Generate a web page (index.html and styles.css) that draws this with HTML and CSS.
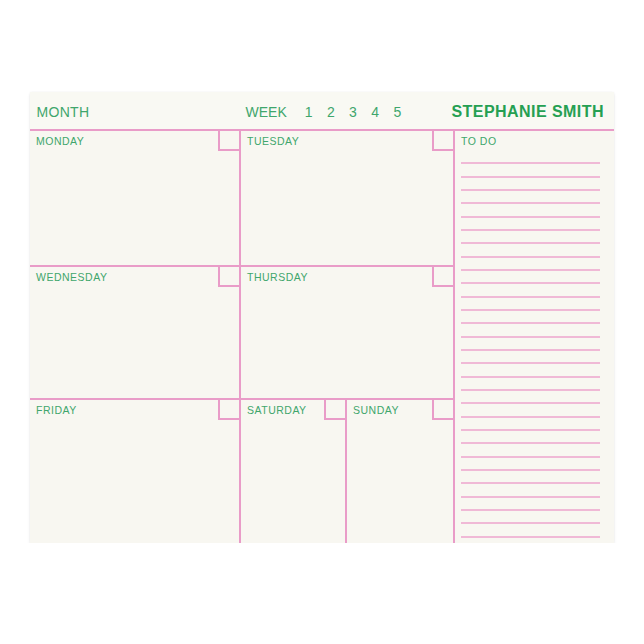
FILE: index.html
```html
<!DOCTYPE html>
<html lang="en">
<head>
<meta charset="utf-8">
<title>Weekly Planner Notepad</title>
<link rel="stylesheet" href="styles.css">
</head>
<body>
<main class="sheet">
  <header class="sheet-head">
    <span class="month">MONTH</span>
    <div class="week">
      <span class="week-label">WEEK</span>
      <ol class="week-nums">
        <li>1</li><li>2</li><li>3</li><li>4</li><li>5</li>
      </ol>
    </div>
    <span class="owner">STEPHANIE SMITH</span>
  </header>
  <div class="planner">
    <section class="day col1 row-line">
      <div class="day-head"><h2 class="day-name">MONDAY</h2><span class="check"></span></div>
    </section>
    <section class="day col2 row-line">
      <div class="day-head"><h2 class="day-name">TUESDAY</h2><span class="check"></span></div>
    </section>
    <section class="todo">
      <h2 class="todo-title">TO DO</h2>
      <ul class="todo-lines">
        <li></li><li></li><li></li><li></li><li></li><li></li><li></li><li></li><li></li><li></li>
        <li></li><li></li><li></li><li></li><li></li><li></li><li></li><li></li><li></li><li></li>
        <li></li><li></li><li></li><li></li><li></li><li></li><li></li><li></li><li></li>
      </ul>
    </section>
    <section class="day col1 row-line">
      <div class="day-head"><h2 class="day-name">WEDNESDAY</h2><span class="check"></span></div>
    </section>
    <section class="day col2 row-line">
      <div class="day-head"><h2 class="day-name">THURSDAY</h2><span class="check"></span></div>
    </section>
    <section class="day col1">
      <div class="day-head"><h2 class="day-name">FRIDAY</h2><span class="check"></span></div>
    </section>
    <div class="weekend">
      <section class="day sat">
        <div class="day-head"><h2 class="day-name">SATURDAY</h2><span class="check"></span></div>
      </section>
      <section class="day sun">
        <div class="day-head"><h2 class="day-name">SUNDAY</h2><span class="check"></span></div>
      </section>
    </div>
  </div>
</main>
</body>
</html>
```

FILE: styles.css
```css
html, body {
  margin: 0;
  padding: 0;
  background: #ffffff;
}

body {
  font-family: "Liberation Sans", Arial, sans-serif;
  padding-top: 92px;
  padding-left: 30px;
}

.sheet {
  width: 584px;
  height: 451px;
  background: #f8f7f1;
  display: flex;
  flex-direction: column;
  box-shadow: 0 1px 0 #dcdcd4, 0 2px 3px rgba(0, 0, 0, 0.08), 0 0 2px rgba(0, 0, 0, 0.05);
}

.sheet-head {
  flex: 0 0 auto;
  padding: 3px 10px 0 6.5px;
  box-sizing: border-box;
  height: 39px;
  border-bottom: 2px solid #e99cc8;
  display: flex;
  align-items: center;
  color: #3fa66c;
  background: #f9f9f3;
}

.month {
  width: 209px;
  font-size: 14px;
  letter-spacing: 0.3px;
}

.week {
  display: flex;
  align-items: center;
  gap: 18px;
  font-size: 14px;
}

.week-nums {
  list-style: none;
  margin: 0;
  padding: 0;
  display: flex;
  gap: 14.4px;
}

.owner {
  margin-left: auto;
  font-size: 16px;
  font-weight: bold;
  letter-spacing: 0.45px;
  color: #25a052;
}

.planner {
  flex: 1 1 auto;
  display: grid;
  grid-template-columns: 211px 212px 161px;
  grid-template-rows: 136px 133px 1fr;
}

.day {
  min-width: 0;
}

.col1 {
  border-right: 2px solid #e99cc8;
}

.row-line {
  border-bottom: 2px solid #e99cc8;
}

.todo {
  grid-column: 3;
  grid-row: 1 / 4;
  border-left: 2px solid #e99cc8;
  padding: 0 14px 0 6px;
}

.day-head {
  display: flex;
  align-items: flex-start;
}

.day-name,
.todo-title {
  margin: 0;
  font-size: 10.5px;
  font-weight: normal;
  letter-spacing: 0.5px;
  line-height: 20px;
  color: #3fa66c;
}

.day-name {
  flex: 1 1 auto;
  padding-left: 6px;
}

.check {
  flex: 0 0 auto;
  width: 21px;
  height: 20px;
  box-sizing: border-box;
  border-left: 2px solid #e99cc8;
  border-bottom: 2px solid #e99cc8;
}

.weekend {
  display: flex;
}

.sat {
  flex: 0 0 106px;
  box-sizing: border-box;
  border-right: 2px solid #e99cc8;
}

.sun {
  flex: 1 1 auto;
}

.todo-lines {
  list-style: none;
  margin: 0;
  padding: 0;
}

.todo-lines li {
  height: 13.33px;
  box-sizing: border-box;
  border-bottom: 2px solid #f0b9d6;
}
```
